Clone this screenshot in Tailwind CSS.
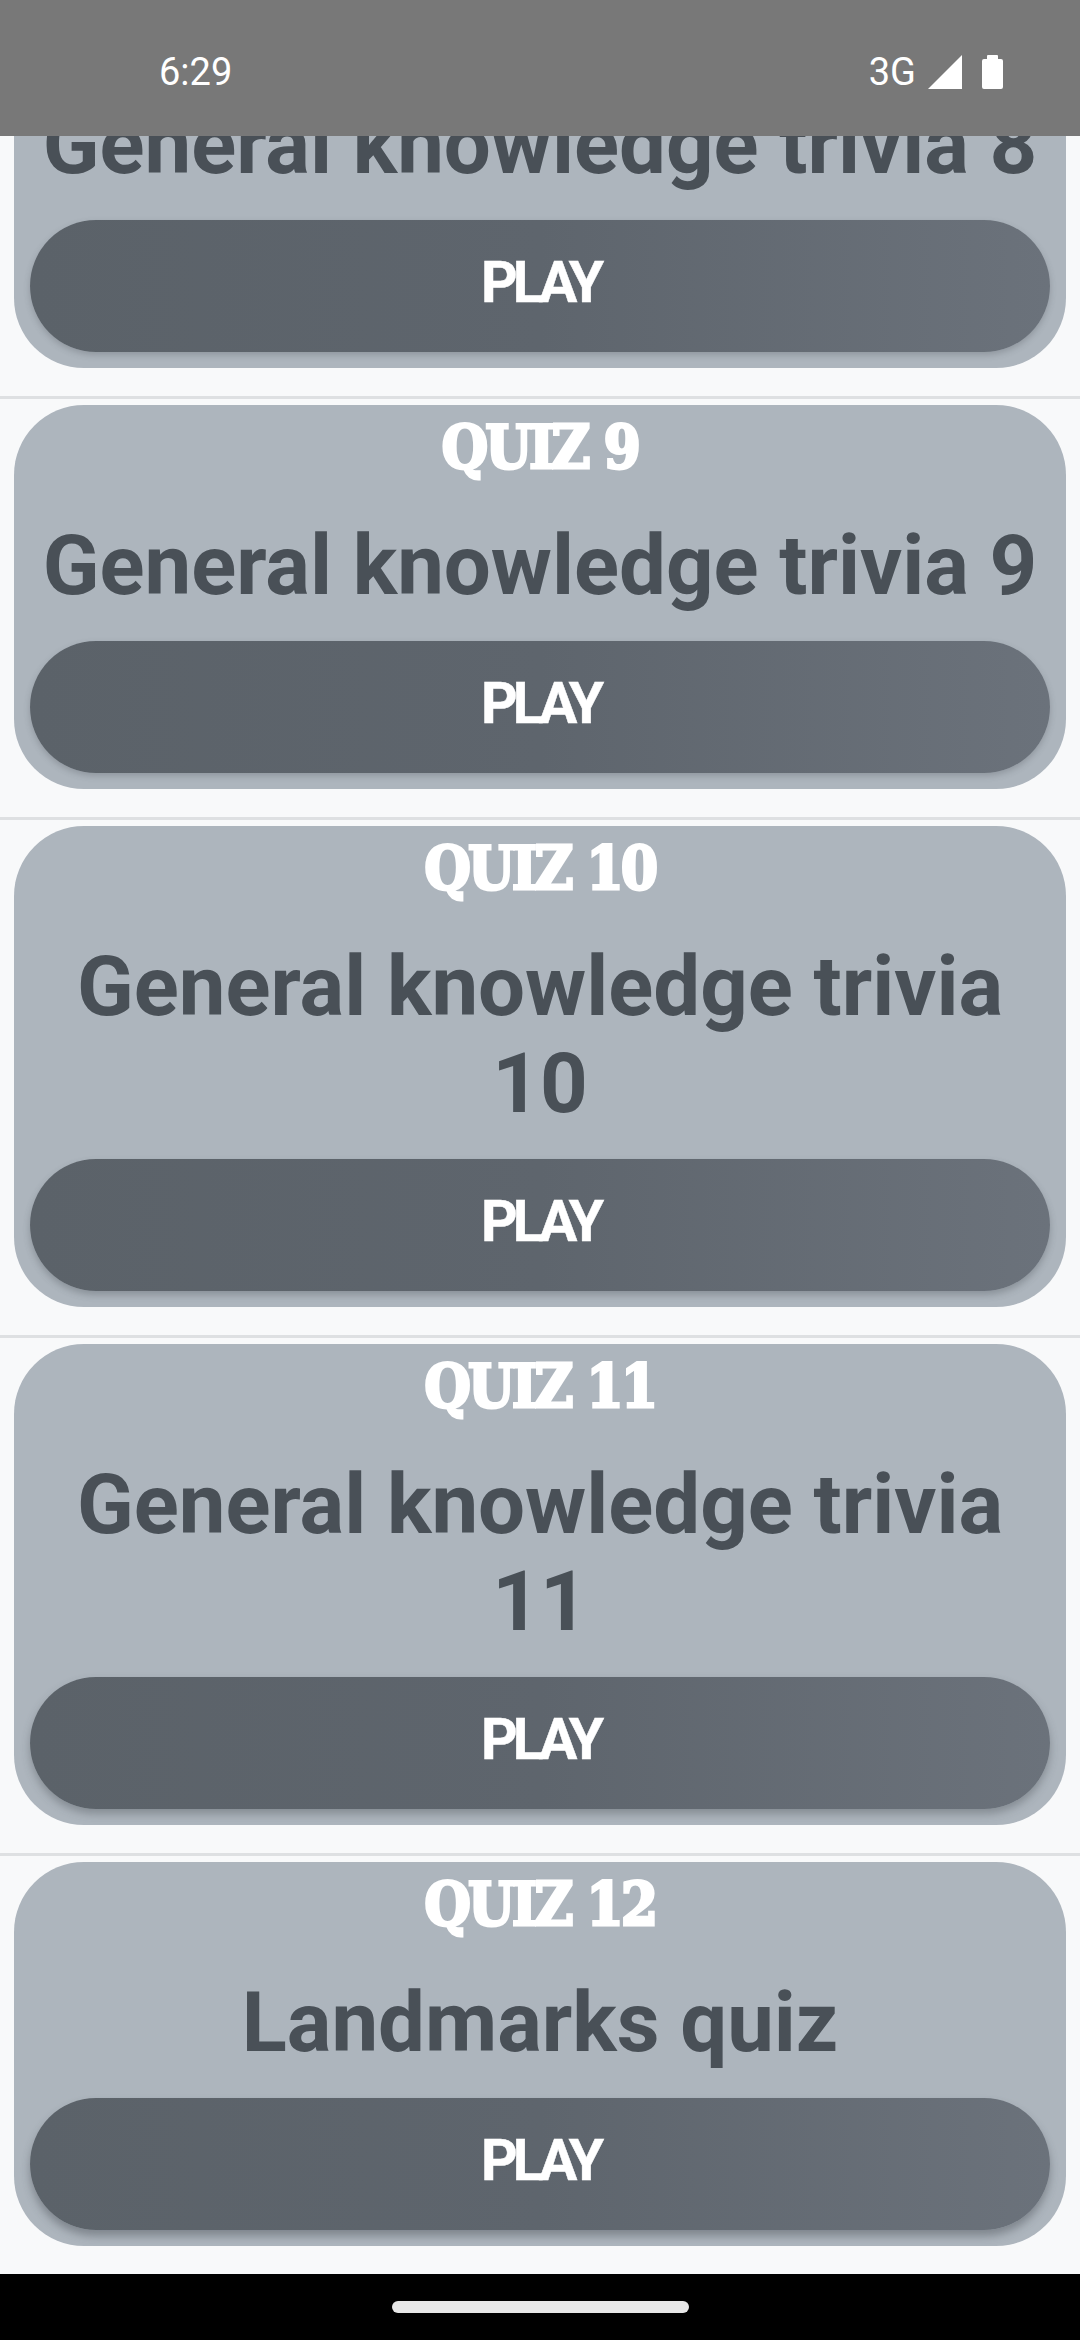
<!DOCTYPE html>
<html lang="en">
<head>
  <meta charset="UTF-8" />
  <meta name="viewport" content="width=device-width, initial-scale=1.0"/>
  <title>Quizzes</title>
  <script src="https://cdn.jsdelivr.net/npm/@tailwindcss/browser@4"></script>
</head>
<body class="bg-[#f8f9fa] font-['Roboto',sans-serif]">
<div class="w-[1080px] h-[2340px] flex flex-col overflow-hidden">

  <!-- status bar -->
  <div class="relative z-10 h-[136px] shrink-0 bg-[#787878] flex items-center pl-[159px] pr-[77px] pt-[7px] text-white text-[38px] leading-none">
    <span>6:29</span>
    <span class="ml-auto">3G</span>
    <svg class="ml-[12px]" width="34" height="34" viewBox="0 0 34 34"><path d="M34 0V34H0Z" fill="#fff"/></svg>
    <svg class="ml-[20px]" width="21" height="35" viewBox="0 0 21 35"><path d="M5 5V2a1 1 0 0 1 1-1h9a1 1 0 0 1 1 1v3h3a2 2 0 0 1 2 2v26a2 2 0 0 1-2 2H2a2 2 0 0 1-2-2V7a2 2 0 0 1 2-2Z" fill="#fff"/></svg>
  </div>

  <!-- list, scrolled so that quiz 8 sits under the status bar -->
  <div class="flex-1 overflow-hidden">
    <div class="-mt-[152px]">

      <div class="mx-[14px] rounded-[70px] bg-[#adb5bd] px-[16px] pb-[16px] text-center">
        <div class="h-[112px]"></div>
        <div class="text-[83.3px] leading-[97px] font-bold text-[#495057] px-[10px] mb-[27px]">General knowledge trivia 8</div>
        <div class="h-[132px] pb-[7px] rounded-[66px] bg-linear-to-r from-[#5b6269] via-[#5e656d] to-[#6b727b] shadow-[0_3px_6px_rgba(60,65,72,0.25)] flex items-center justify-center text-white font-bold text-[57px] tracking-[-5px] [-webkit-text-stroke:0.5px_white]">PLAY</div>
      </div>
      <div class="mt-[28px] h-[3px] bg-[#dee0e2]"></div>

      <div class="mx-[14px] mt-[6px] rounded-[70px] bg-[#adb5bd] px-[16px] pb-[16px] text-center">
        <div class="h-[112px] pt-[5px] text-white font-['DejaVu_Serif',serif] font-bold text-[59px] leading-[76px] [font-stretch:condensed] tracking-[-2.5px] [-webkit-text-stroke:3px_white]">QUIZ 9</div>
        <div class="text-[83.3px] leading-[97px] font-bold text-[#495057] px-[10px] mb-[27px]">General knowledge trivia 9</div>
        <div class="h-[132px] pb-[7px] rounded-[66px] bg-linear-to-r from-[#5b6269] via-[#5e656d] to-[#6b727b] shadow-[0_3px_6px_rgba(60,65,72,0.25)] flex items-center justify-center text-white font-bold text-[57px] tracking-[-5px] [-webkit-text-stroke:0.5px_white]">PLAY</div>
      </div>
      <div class="mt-[28px] h-[3px] bg-[#dee0e2]"></div>

      <div class="mx-[14px] mt-[6px] rounded-[70px] bg-[#adb5bd] px-[16px] pb-[16px] text-center">
        <div class="h-[112px] pt-[5px] text-white font-['DejaVu_Serif',serif] font-bold text-[59px] leading-[76px] [font-stretch:condensed] tracking-[-2.5px] [-webkit-text-stroke:3px_white]">QUIZ 10</div>
        <div class="text-[83.3px] leading-[97px] font-bold text-[#495057] px-[10px] mb-[27px]">General knowledge trivia 10</div>
        <div class="h-[132px] pb-[7px] rounded-[66px] bg-linear-to-r from-[#5b6269] via-[#5e656d] to-[#6b727b] shadow-[0_4px_7px_rgba(60,65,72,0.3)] flex items-center justify-center text-white font-bold text-[57px] tracking-[-5px] [-webkit-text-stroke:0.5px_white]">PLAY</div>
      </div>
      <div class="mt-[28px] h-[3px] bg-[#dee0e2]"></div>

      <div class="mx-[14px] mt-[6px] rounded-[70px] bg-[#adb5bd] px-[16px] pb-[16px] text-center">
        <div class="h-[112px] pt-[5px] text-white font-['DejaVu_Serif',serif] font-bold text-[59px] leading-[76px] [font-stretch:condensed] tracking-[-2.5px] [-webkit-text-stroke:3px_white]">QUIZ 11</div>
        <div class="text-[83.3px] leading-[97px] font-bold text-[#495057] px-[10px] mb-[27px]">General knowledge trivia 11</div>
        <div class="h-[132px] pb-[7px] rounded-[66px] bg-linear-to-r from-[#5b6269] via-[#5e656d] to-[#6b727b] shadow-[0_5px_8px_rgba(60,65,72,0.35)] flex items-center justify-center text-white font-bold text-[57px] tracking-[-5px] [-webkit-text-stroke:0.5px_white]">PLAY</div>
      </div>
      <div class="mt-[28px] h-[3px] bg-[#dee0e2]"></div>

      <div class="mx-[14px] mt-[6px] rounded-[70px] bg-[#adb5bd] px-[16px] pb-[16px] text-center">
        <div class="h-[112px] pt-[5px] text-white font-['DejaVu_Serif',serif] font-bold text-[59px] leading-[76px] [font-stretch:condensed] tracking-[-2.5px] [-webkit-text-stroke:3px_white]">QUIZ 12</div>
        <div class="text-[83.3px] leading-[97px] font-bold text-[#495057] px-[10px] mb-[27px]">Landmarks quiz</div>
        <div class="h-[132px] pb-[7px] rounded-[66px] bg-linear-to-r from-[#5b6269] via-[#5e656d] to-[#6b727b] shadow-[0_6px_8px_rgba(60,65,72,0.4)] flex items-center justify-center text-white font-bold text-[57px] tracking-[-5px] [-webkit-text-stroke:0.5px_white]">PLAY</div>
      </div>

    </div>
  </div>

  <!-- navigation bar -->
  <div class="relative z-10 h-[66px] shrink-0 bg-black flex items-start justify-center pt-[27px]">
    <div class="w-[297px] h-[12px] rounded-full bg-[#e8e8e8]"></div>
  </div>
</div>
</body>
</html>
